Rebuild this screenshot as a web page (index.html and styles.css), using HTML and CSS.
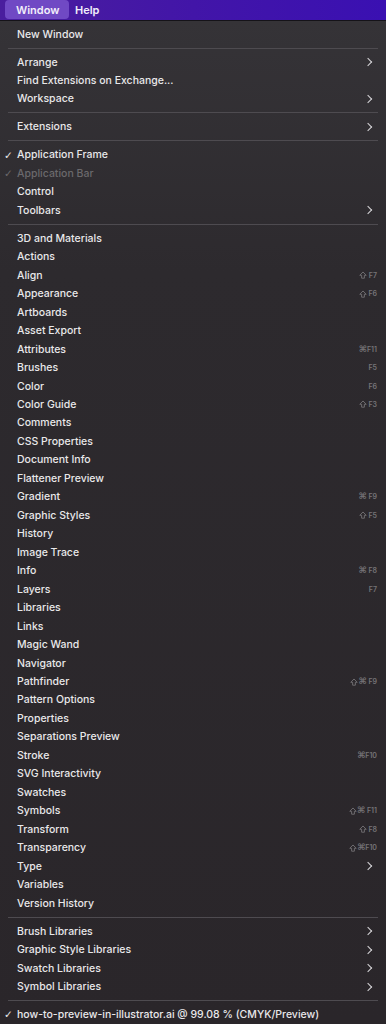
FILE: index.html
```html
<!DOCTYPE html>
<html>
<head>
<meta charset="utf-8">
<link rel="stylesheet" href="styles.css">
</head>
<body>
<svg width="0" height="0" class="defs">
  <symbol id="shift" viewBox="0 0 10 10"><path d="M5 1.2 L9 5.4 H6.7 V9 H3.3 V5.4 H1 Z" fill="none" stroke="currentColor" stroke-width="1.1" stroke-linejoin="round"/></symbol>
</svg>
<div class="menubar">
  <span class="mb-item active">Window</span>
  <span class="mb-item">Help</span>
</div>
<div class="menu">
  <div class="row"><span class="label">New Window</span></div>
  <div class="sep"></div>
  <div class="row sub"><span class="label">Arrange</span></div>
  <div class="row"><span class="label">Find Extensions on Exchange...</span></div>
  <div class="row sub"><span class="label">Workspace</span></div>
  <div class="sep"></div>
  <div class="row sub"><span class="label">Extensions</span></div>
  <div class="sep"></div>
  <div class="row checked"><span class="label">Application Frame</span></div>
  <div class="row checked disabled"><span class="label">Application Bar</span></div>
  <div class="row"><span class="label">Control</span></div>
  <div class="row sub"><span class="label">Toolbars</span></div>
  <div class="sep"></div>
  <div class="row"><span class="label">3D and Materials</span></div>
  <div class="row"><span class="label">Actions</span></div>
  <div class="row"><span class="label">Align</span><span class="key"><svg class="sh"><use href="#shift"/></svg> F7</span></div>
  <div class="row"><span class="label">Appearance</span><span class="key"><svg class="sh"><use href="#shift"/></svg> F6</span></div>
  <div class="row"><span class="label">Artboards</span></div>
  <div class="row"><span class="label">Asset Export</span></div>
  <div class="row"><span class="label">Attributes</span><span class="key"><b>⌘</b>F11</span></div>
  <div class="row"><span class="label">Brushes</span><span class="key">F5</span></div>
  <div class="row"><span class="label">Color</span><span class="key">F6</span></div>
  <div class="row"><span class="label">Color Guide</span><span class="key"><svg class="sh"><use href="#shift"/></svg> F3</span></div>
  <div class="row"><span class="label">Comments</span></div>
  <div class="row"><span class="label">CSS Properties</span></div>
  <div class="row"><span class="label">Document Info</span></div>
  <div class="row"><span class="label">Flattener Preview</span></div>
  <div class="row"><span class="label">Gradient</span><span class="key"><b>⌘</b> F9</span></div>
  <div class="row"><span class="label">Graphic Styles</span><span class="key"><svg class="sh"><use href="#shift"/></svg> F5</span></div>
  <div class="row"><span class="label">History</span></div>
  <div class="row"><span class="label">Image Trace</span></div>
  <div class="row"><span class="label">Info</span><span class="key"><b>⌘</b> F8</span></div>
  <div class="row"><span class="label">Layers</span><span class="key">F7</span></div>
  <div class="row"><span class="label">Libraries</span></div>
  <div class="row"><span class="label">Links</span></div>
  <div class="row"><span class="label">Magic Wand</span></div>
  <div class="row"><span class="label">Navigator</span></div>
  <div class="row"><span class="label">Pathfinder</span><span class="key"><svg class="sh"><use href="#shift"/></svg> <b>⌘</b> F9</span></div>
  <div class="row"><span class="label">Pattern Options</span></div>
  <div class="row"><span class="label">Properties</span></div>
  <div class="row"><span class="label">Separations Preview</span></div>
  <div class="row"><span class="label">Stroke</span><span class="key"><b>⌘</b>F10</span></div>
  <div class="row"><span class="label">SVG Interactivity</span></div>
  <div class="row"><span class="label">Swatches</span></div>
  <div class="row"><span class="label">Symbols</span><span class="key"><svg class="sh"><use href="#shift"/></svg> <b>⌘</b> F11</span></div>
  <div class="row"><span class="label">Transform</span><span class="key"><svg class="sh"><use href="#shift"/></svg> F8</span></div>
  <div class="row"><span class="label">Transparency</span><span class="key"><svg class="sh"><use href="#shift"/></svg> <b>⌘</b>F10</span></div>
  <div class="row sub"><span class="label">Type</span></div>
  <div class="row"><span class="label">Variables</span></div>
  <div class="row"><span class="label">Version History</span></div>
  <div class="sep"></div>
  <div class="row sub"><span class="label">Brush Libraries</span></div>
  <div class="row sub"><span class="label">Graphic Style Libraries</span></div>
  <div class="row sub"><span class="label">Swatch Libraries</span></div>
  <div class="row sub"><span class="label">Symbol Libraries</span></div>
  <div class="sep"></div>
  <div class="row checked"><span class="label">how-to-preview-in-illustrator.ai @ 99.08 % (CMYK/Preview)</span></div>
</div>
</body>
</html>
```

FILE: styles.css
```css
html, body {
  margin: 0;
  padding: 0;
}
body {
  width: 386px;
  height: 1024px;
  overflow: hidden;
  background: #2a272b;
  font-family: Inter, "Noto Sans", sans-serif;
  -webkit-font-smoothing: antialiased;
}
.defs {
  position: absolute;
  width: 0;
  height: 0;
}
.menubar {
  height: 20px;
  background: linear-gradient(90deg, #4a1e9e 0%, #4215a8 50%, #3a10b2 100%);
  display: flex;
  align-items: stretch;
  padding-left: 5px;
  border-bottom: 1px solid #151318;
  box-sizing: content-box;
}
.mb-item {
  display: flex;
  align-items: center;
  padding: 0 11px;
  color: #f2eefa;
  font-size: 11px;
  font-weight: 600;
  border-radius: 4px;
}
.mb-item.active {
  background: #7049c4;
  width: 42px;
  margin-bottom: 1px;
}
.mb-item + .mb-item {
  padding-left: 6px;
}
.menu {
  background: linear-gradient(180deg, #353337 0%, #2d2a2e 25%, #2a262a 100%);
  padding-top: 3.8px;
  height: 1003px;
  box-sizing: border-box;
}
.row {
  height: 18.47px;
  display: flex;
  align-items: center;
  padding-left: 17px;
  padding-right: 9px;
  position: relative;
  color: #e9e8ea;
  font-size: 10.5px;
  font-weight: 500;
}
.label {
  flex: 1;
  white-space: nowrap;
}
.row.disabled {
  color: #6b696c;
}
.row.checked::before {
  content: "✓";
  position: absolute;
  left: 4px;
  top: 0;
  height: 100%;
  display: flex;
  align-items: center;
  font-size: 10.5px;
  font-family: "DejaVu Sans", sans-serif;
}
.row.sub::after {
  content: "";
  width: 5px;
  height: 5px;
  border-right: 1.6px solid #d8d7da;
  border-top: 1.6px solid #d8d7da;
  transform: rotate(45deg);
  margin-right: 6px;
}
.key {
  color: #767477;
  font-size: 7px;
  font-weight: 600;
  display: flex;
  align-items: center;
  white-space: pre;
}
.key .sh {
  width: 8px;
  height: 8px;
}
.key b {
  font-family: "DejaVu Sans", sans-serif;
  font-size: 9px;
  font-weight: 700;
  line-height: 1;
}
.sep {
  height: 9.5px;
  display: flex;
  align-items: center;
  padding: 0 8px;
}
.sep::before {
  content: "";
  flex: 1;
  height: 1px;
  background: #4e4b50;
}
```
